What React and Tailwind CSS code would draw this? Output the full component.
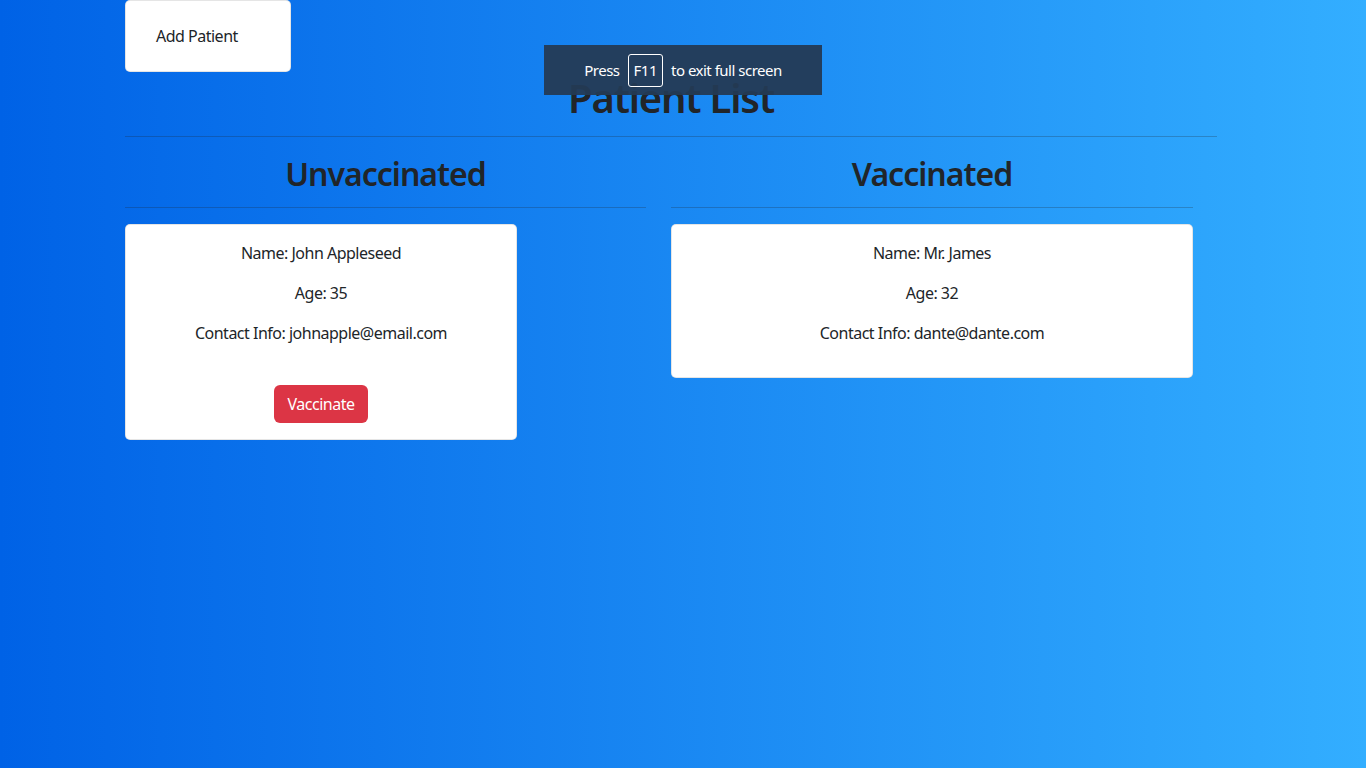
import React from "react";

const unvaccinated = [
    { name: "John Appleseed", age: 35, contact: "johnapple@email.com" },
];

const vaccinated = [
    { name: "Mr. James", age: 32, contact: "dante@dante.com" },
];

function PatientCard({ patient, onVaccinate, width }) {
    return (
        <div className={`${width} bg-white border border-black/10 rounded-[5px] p-4 text-center`}>
            <p className="mb-4">Name: {patient.name}</p>
            <p className="mb-4">Age: {patient.age}</p>
            <p className="mb-4">Contact Info: {patient.contact}</p>
            {onVaccinate && (
                <button className="mt-[24px] h-[38px] px-[14px] rounded-[6px] bg-[#dc3545] text-white">
                    Vaccinate
                </button>
            )}
        </div>
    );
}

export default function App() {
    return (
        <div
            className="min-h-screen bg-[linear-gradient(to_right,#0062e6,#33aeff)] text-[#212529] text-base leading-6 tracking-[-0.5px] relative"
            style={{ fontFamily: '"Noto Sans", "Open Sans", sans-serif' }}
        >
            <div className="w-[1092px] ml-[125px]">
                {/* Add button */}
                <button className="w-[166px] h-[72px] bg-white border border-black/10 rounded-[5px] text-left pl-[30px]">
                    Add Patient
                </button>

                <h1 className="text-center text-[40px] leading-[48px] font-semibold tracking-[-1.2px] mt-[2px] mb-[14px]">Patient List</h1>
                <hr className="border-t border-[#212529]/25" />

                <div className="flex gap-[25px] mt-[18px]">
                    {/* Unvaccinated column */}
                    <div className="w-[521px]">
                        <h2 className="text-center text-[32px] leading-[38px] font-semibold tracking-[-1px] mb-[14px]">Unvaccinated</h2>
                        <hr className="border-t border-[#212529]/25 mb-4" />
                        {unvaccinated.map((p) => (
                            <PatientCard key={p.name} patient={p} width="w-[392px]" onVaccinate={() => {}} />
                        ))}
                    </div>

                    {/* Vaccinated column */}
                    <div className="w-[522px]">
                        <h2 className="text-center text-[32px] leading-[38px] font-semibold tracking-[-1px] mb-[14px]">Vaccinated</h2>
                        <hr className="border-t border-[#212529]/25 mb-4" />
                        {vaccinated.map((p) => (
                            <PatientCard key={p.name} patient={p} width="w-full" />
                        ))}
                    </div>
                </div>
            </div>

            {/* Full screen hint */}
            <div className="absolute left-[544px] top-[45px] w-[278px] h-[50px] bg-[#243a54]/95 text-white text-[15px] flex items-center justify-center gap-2">
                <span>Press</span>
                <span className="border border-white rounded-[3px] px-[5px] h-[33px] flex items-center">F11</span>
                <span>to exit full screen</span>
            </div>
        </div>
    );
}
